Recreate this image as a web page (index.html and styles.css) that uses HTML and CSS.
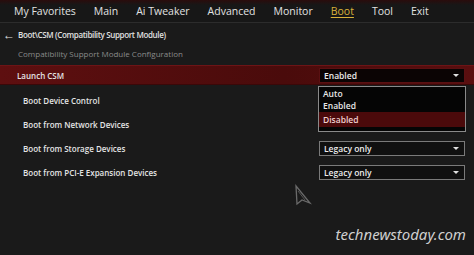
FILE: index.html
```html
<!DOCTYPE html>
<html lang="en">
<head>
    <meta charset="UTF-8">
    <title>Boot - CSM</title>
    <link rel="stylesheet" href="styles.css">
</head>
<body>
    <div class="screen">
        <nav class="tabs">
            <span class="tab">My Favorites</span>
            <span class="tab">Main</span>
            <span class="tab">Ai Tweaker</span>
            <span class="tab">Advanced</span>
            <span class="tab">Monitor</span>
            <span class="tab active">Boot</span>
            <span class="tab">Tool</span>
            <span class="tab">Exit</span>
        </nav>

        <div class="crumb"><span class="back">&#8592;</span>Boot\CSM (Compatibility Support Module)</div>
        <div class="section">Compatibility Support Module Configuration</div>

        <div class="rows">
            <div class="row selected">
                <span class="label">Launch CSM</span>
                <div class="select red">
                    <span>Enabled</span>
                    <span class="arrow"></span>
                </div>
                <ul class="menu">
                    <li>Auto</li>
                    <li>Enabled</li>
                    <li class="hl">Disabled</li>
                </ul>
            </div>
            <div class="row sub"><span class="label">Boot Device Control</span></div>
            <div class="row sub"><span class="label">Boot from Network Devices</span></div>
            <div class="row sub">
                <span class="label">Boot from Storage Devices</span>
                <div class="select">
                    <span>Legacy only</span>
                    <span class="arrow"></span>
                </div>
            </div>
            <div class="row sub">
                <span class="label">Boot from PCI-E Expansion Devices</span>
                <div class="select">
                    <span>Legacy only</span>
                    <span class="arrow"></span>
                </div>
            </div>
        </div>

        <svg class="cursor" width="18" height="22" viewBox="0 0 18 22">
            <path d="M2 2 L16 19 L8 16 L3 20 Z" fill="none" stroke="#6a6a6a" stroke-width="1.3"/>
            <path d="M4 7 L11 16" stroke="#555" stroke-width="1"/>
        </svg>

        <div class="mark">technewstoday.com</div>
    </div>
</body>
</html>
```

FILE: styles.css
```css
* {
    margin: 0;
    padding: 0;
    box-sizing: border-box;
}

body {
    background-color: #1a1a1a;
    font-family: "Open Sans", "Noto Sans", sans-serif;
    color: #e6e6e6;
}

.screen {
    position: relative;
    width: 474px;
    height: 255px;
    overflow: hidden;
    background-color: #1a1a1a;
}

.tabs {
    display: flex;
    height: 23px;
    padding-left: 14px;
    gap: 18px;
    align-items: center;
    background: linear-gradient(#2a0c0c, #171717 5px);
    border-bottom: 1px solid #2c2c2c;
}

.tab {
    font-size: 10.5px;
    font-weight: 500;
    color: #e2e2e2;
}

.tab.active {
    color: #d9b23a;
    text-decoration: underline;
    text-underline-offset: 2px;
}

.crumb {
    display: flex;
    align-items: center;
    font-size: 8px;
    font-weight: 600;
    letter-spacing: -0.35px;
    color: #e0e0e0;
    padding-left: 3px;
    height: 22px;
}

.back {
    font-size: 12px;
    width: 15px;
    letter-spacing: 0;
}

.section {
    font-size: 8px;
    color: #8a8a8a;
    padding: 3px 0 0 18px;
    height: 20px;
}

.row {
    position: relative;
    display: flex;
    align-items: center;
    justify-content: space-between;
    height: 24px;
    padding: 0 9px 0 17px;
}

.row.selected {
    height: 20px;
    margin-bottom: 3px;
    background: linear-gradient(90deg, #5e0f10, #4a0b0b 60%, #5a0e0f);
    border-top: 1px solid #6d1416;
    border-bottom: 1px solid #3a0808;
}

.row.sub {
    padding-left: 23px;
}

.label {
    font-size: 8px;
    font-weight: 600;
    color: #e4e4e4;
}

.select {
    display: flex;
    align-items: center;
    justify-content: space-between;
    width: 146px;
    height: 15px;
    padding: 0 5px 0 4px;
    background-color: #101010;
    border: 1px solid #7a7a7a;
    font-size: 8.5px;
    font-weight: 600;
    color: #ececec;
}

.select.red {
    background-color: #0b0404;
    border-color: #5a1012;
}

.arrow {
    width: 0;
    height: 0;
    border-left: 3px solid transparent;
    border-right: 3px solid transparent;
    border-top: 3px solid #e0e0e0;
}

.menu {
    position: absolute;
    top: 20px;
    right: 8px;
    width: 148px;
    list-style: none;
    background-color: #050505;
    border: 1px solid #8a8a8a;
    padding: 1px 0 4px;
    z-index: 2;
}

.menu li {
    height: 12px;
    line-height: 12px;
    padding-left: 4px;
    font-size: 8.5px;
    font-weight: 600;
    color: #e8e8e8;
}

.menu li.hl {
    height: 15px;
    line-height: 15px;
    background-color: #4b0a0b;
    color: #f0d0d0;
}

.cursor {
    position: absolute;
    left: 294px;
    top: 184px;
}

.mark {
    position: absolute;
    right: 8px;
    top: 224px;
    font-family: "Noto Sans", sans-serif;
    font-style: italic;
    font-size: 15px;
    color: #cfcfcf;
}
```
